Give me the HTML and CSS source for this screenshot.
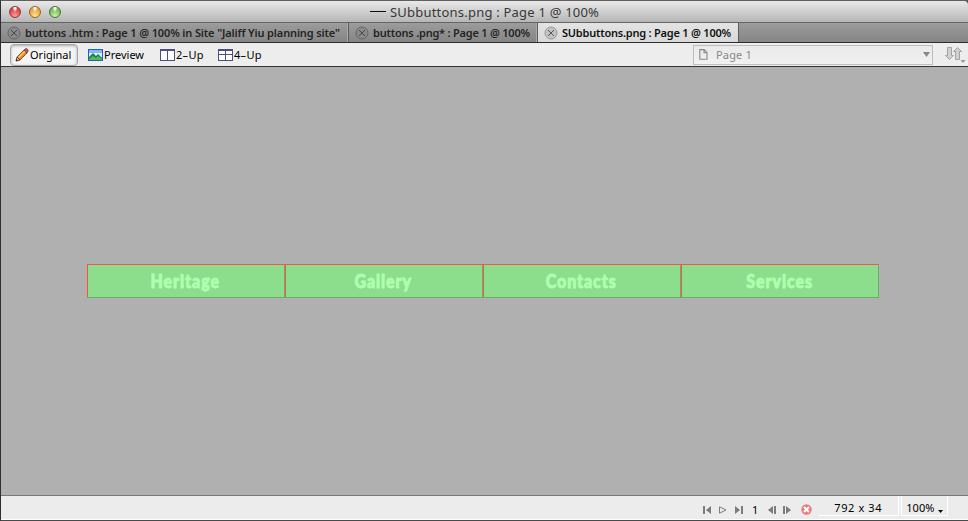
FILE: index.html
```html
<!DOCTYPE html>
<html lang="en">
<head>
<meta charset="utf-8">
<title>SUbbuttons.png</title>
<link rel="stylesheet" href="styles.css">
</head>
<body>
<div class="window">
  <header class="titlebar">
    <div class="lights"><i class="light red"></i><i class="light amber"></i><i class="light green"></i></div>
    <i class="dash"></i><span class="title">SUbbuttons.png : Page 1 @ 100%</span>
  </header>
  <nav class="tabs">
    <div class="tab first"><svg class="close" viewBox="0 0 14 14"><circle cx="7" cy="7" r="6"/><path d="M4 4l6 6M10 4l-6 6"/></svg><span class="t1">buttons .htm : Page 1 @ 100% in Site "Jaliff Yiu planning site"</span></div>
    <div class="tab second"><svg class="close" viewBox="0 0 14 14"><circle cx="7" cy="7" r="6"/><path d="M4 4l6 6M10 4l-6 6"/></svg><span class="t2">buttons .png* : Page 1 @ 100%</span></div>
    <div class="tab active"><svg class="close" viewBox="0 0 14 14"><circle cx="7" cy="7" r="6"/><path d="M4 4l6 6M10 4l-6 6"/></svg><span class="t3">SUbbuttons.png : Page 1 @ 100%</span></div>
  </nav>
  <div class="toolbar">
    <div class="tool original">
      <svg width="14" height="14" viewBox="0 0 14 14"><path d="M1 13l1-4 3 3z" fill="#e9c79a" stroke="#222" stroke-width=".8"/><path d="M2 9l7-7 3 3-7 7z" fill="#f28a22" stroke="#63320e" stroke-width=".8"/><path d="M3.500 9.500l7-7" stroke="#ffd36b" stroke-width="1.200"/><path d="M9 2l1.500-1.300q1-.6 2 .5t.5 2L12 5z" fill="#cf5a4e" stroke="#642b27" stroke-width=".7"/><path d="M1 13l.5-1.800 1.300 1.300z" fill="#111"/></svg>
      <span>Original</span>
    </div>
    <div class="tool preview">
      <svg width="15" height="12" viewBox="0 0 15 12"><path fill="#2a5dac" d="M0 0h15v12H0z"/><path fill="#7fbdf0" d="M1 1h13v10H1z"/><path fill="#d7effc" d="M1 4h13v4H1z"/><path fill="#208044" d="M1 8l4-4 3 3 2-2 4 4v2H1z"/><path fill="#55b562" d="M1 10l4-3 3 2 2-2 4 3v1H1z"/></svg>
      <span>Preview</span>
    </div>
    <div class="tool two">
      <svg width="15" height="12" viewBox="0 0 15 12" shape-rendering="crispEdges"><path fill="#4b4e7e" d="M0 0h15v12H0z"/><path fill="#fff" d="M1 2h6v9H1zM8 2h6v9H8z"/></svg>
      <span>2–Up</span>
    </div>
    <div class="tool four">
      <svg width="15" height="12" viewBox="0 0 15 12" shape-rendering="crispEdges"><path fill="#4b4e7e" d="M0 0h15v12H0z"/><path fill="#fff" d="M1 2h6v3H1zM8 2h6v3H8zM1 6h6v5H1zM8 6h6v5H8z"/></svg>
      <span>4–Up</span>
    </div>
    <div class="select">
      <svg width="9" height="11" viewBox="0 0 9 11"><path d="M.8.6h4.400L8 3.600v6.600H.8zM5 .8v3h3" fill="none" stroke="#888" stroke-width="1.100"/></svg>
      <span>Page 1</span>
      <svg class="down" width="7" height="5" viewBox="0 0 7 5"><path fill="#888" d="M0 0h7L3.500 5z"/></svg>
    </div>
    <svg class="arrows" width="21" height="17" viewBox="0 0 21 17"><path d="M2.500 1.500h4v8h2l-4 4-4-4h2zM10.500 13.500h4v-8h2l-4-4-4 4h2z" fill="#d0d0d0" stroke="#a3a3a3"/><path fill="#999" d="M15.500 14h5L18 17z"/></svg>
  </div>
  <main class="canvas">
    <div class="buttons">
      <div class="slice"><span>Heritage</span></div>
      <div class="slice"><span>Gallery</span></div>
      <div class="slice"><span>Contacts</span></div>
      <div class="slice"><span>Services</span></div>
    </div>
  </main>
  <footer class="status">
    <svg class="play" width="42" height="8" viewBox="0 0 42 8"><path fill="#7c7c7c" d="M0 0h2v8H0zM8 0v8L3 4zM32 0l5 4-5 4zM38 0h2v8h-2z"/><path d="M16.500 .8v6.400l6.500-3.200z" fill="none" stroke="#7c7c7c"/></svg>
    <span class="frame">1</span>
    <svg class="step" width="23" height="8" viewBox="0 0 23 8"><path fill="#7c7c7c" d="M5 0v8L0 4zM6 0h2v8H6zM15 0h2v8h-2zM18 0l5 4-5 4z"/></svg>
    <svg class="stop" width="11" height="11" viewBox="0 0 11 11"><circle cx="5.500" cy="5.500" r="5.200" fill="#ea7c7c"/><path d="M3 3l5 5M8 3l-5 5" stroke="#fff" stroke-width="1.900"/></svg>
    <div class="size"><span>792 x 34</span></div>
    <div class="zoom"><span>100%</span><svg width="5" height="3" viewBox="0 0 5 3"><path d="M0 0h5L2.500 3z"/></svg></div>
  </footer>
</div>
</body>
</html>
```
FILE: styles.css
```css
* { box-sizing: border-box; }
body { margin: 0; background: #4b484a; font-family: "Noto Sans", "Open Sans", sans-serif; font-size: 11px; color: #000; }
svg, i { display: block; flex: none; }
span { display: block; white-space: nowrap; flex: none; }
.window { width: 968px; height: 521px; border-left: 1px solid #302d2f; border-top: 1px solid #625e60; border-bottom: 1px solid #4a4a4a; display: flex; flex-direction: column; overflow: hidden; }
.titlebar { height: 22px; flex: none; display: flex; align-items: center; background: linear-gradient(#e8e8e8, #b6b6b6); border-bottom: 1px solid #656565; border-top-right-radius: 4px; }
.lights { display: flex; gap: 8px; padding-left: 8px; width: 369px; }
.light { width: 12px; height: 12px; border-radius: 50%; border: 1px solid #6b5550; }
.red { background: radial-gradient(ellipse at 50% 5%, #fff 0 12%, transparent 35%), radial-gradient(circle at 50% 90%, #ff9d99, #dc4549 65%); border-color: #8c3838; }
.amber { background: radial-gradient(ellipse at 50% 5%, #fff 0 12%, transparent 35%), radial-gradient(circle at 50% 90%, #ffe891, #e9a33c 65%); border-color: #996329; }
.green { background: radial-gradient(ellipse at 50% 5%, #fff 0 12%, transparent 35%), radial-gradient(circle at 50% 90%, #cff6a4, #79b957 65%); border-color: #47743a; }
.dash { width: 16px; height: 1px; background: #111; margin-right: 4px; }
.title { font-size: 13px; color: #383838; letter-spacing: .21px; }
.tabs { height: 20px; flex: none; display: flex; background: linear-gradient(#9c9c9c, #858585); border-bottom: 1px solid #2e2e2e; }
.tab { display: flex; align-items: center; padding-left: 6px; border-right: 1px solid #5d5d5d; box-shadow: inset -1px 0 #aaa; font-weight: 600; color: #242424; }
.t1 { letter-spacing: -.14px; }
.t2, .t3 { letter-spacing: -.22px; }
.first { width: 348px; }
.second { width: 189px; }
.active { width: 201px; background: linear-gradient(#e3e3e3, #d9d9d9); color: #111; box-shadow: none; }
.close { width: 14px; height: 14px; margin-right: 4px; fill: #888; stroke: #4a4a4a; stroke-width: 1; }
.close circle { stroke: #666; }
.active .close { fill: #c2c2c2; stroke: #555; }
.active .close circle { stroke: #999; }
.toolbar { height: 24px; flex: none; display: flex; align-items: center; background: #ededed; border-bottom: 1px solid #333; }
.tool { display: flex; align-items: center; height: 22px; }
.original { width: 68px; margin-left: 9px; padding-left: 4px; gap: 1px; border: 1px solid #a6a6a6; border-radius: 4px; background: #f4f4f4; box-shadow: inset 0 1px 3px #aaa; }
.original span { letter-spacing: 0; }
.preview { margin-left: 10px; width: 72px; gap: 1px; }
.two { width: 58px; gap: 1px; }
.four { width: 60px; gap: 1px; }
.two span, .four span { letter-spacing: .3px; }
.select { margin-left: auto; width: 240px; height: 20px; border: 1px solid #bdbdbd; display: flex; align-items: center; padding: 0 2px 0 5px; color: #888; background: linear-gradient(#e9e9e9, #f1f1f1); }
.select span { margin-left: 8px; letter-spacing: .15px; }
.down { margin-left: auto; }
.arrows { margin: 0 2px 0 12px; }
.canvas { flex: 1; display: flex; align-items: flex-start; padding: 197px 0 0 86px; background: #b0b0b0; }
.buttons { display: flex; width: 792px; height: 34px; border-top: 1px solid #ee584b; }
.slice { width: 198px; height: 33px; background: #8cdd8c; box-shadow: inset 1px 0 #ee584b; border-right: 1px solid #64b164; border-bottom: 1px solid #64b164; display: flex; justify-content: center; align-items: center; color: #b0ffb0; font-family: Lato, sans-serif; font-weight: 900; font-size: 19px; line-height: 30px; }
.slice span { transform: scaleX(.84); letter-spacing: 1.1px; -webkit-text-stroke: .9px #b0ffb0; }
.status { height: 25px; flex: none; display: flex; align-items: center; background: #ececec; border-top: 1px solid #777; border-bottom: 1px solid #fff; }
.play { margin: 4px 0 0 702px; }
.frame { margin: 4px 0 0 7px; }
.step { margin: 4px 0 0 10px; }
.stop { margin: 4px 0 0 10px; }
.size { margin-left: 7px; width: 80px; height: 20px; align-self: flex-start; border-right: 1px solid #fff; border-bottom: 1px solid #fff; padding: 4px 0 0 15px; line-height: 16px; letter-spacing: .6px; }
.zoom { margin-left: 2px; width: 47px; height: 20px; align-self: flex-start; display: flex; gap: 4px; border-right: 1px solid #fff; border-left: 1px solid #fff; border-bottom: 1px solid #fff; padding: 4px 0 0 4px; line-height: 16px; }
.zoom svg { margin-top: 10px; }
```
